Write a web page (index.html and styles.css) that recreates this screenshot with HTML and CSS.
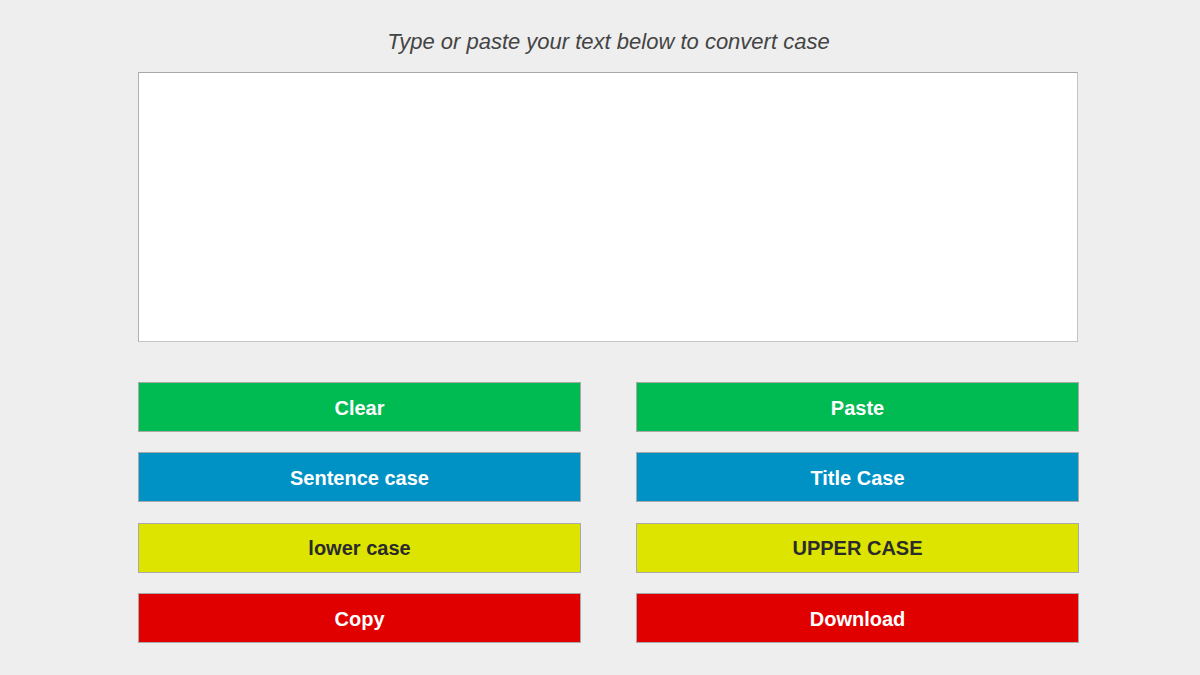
FILE: index.html
```html
<!DOCTYPE html>
<html>
<head>
<meta charset="utf-8">
<link rel="stylesheet" href="styles.css">
</head>
<body>
<div class="wrap">
  <h1 class="title">Type or paste your text below to convert case</h1>
  <textarea class="input"></textarea>
  <div class="buttons">
    <button class="btn green">Clear</button>
    <button class="btn green">Paste</button>
    <button class="btn blue">Sentence case</button>
    <button class="btn blue">Title Case</button>
    <button class="btn yellow">lower case</button>
    <button class="btn yellow">UPPER CASE</button>
    <button class="btn red">Copy</button>
    <button class="btn red">Download</button>
  </div>
</div>
</body>
</html>
```
FILE: styles.css
```css
html, body {
  margin: 0;
  padding: 0;
  background: #eeeeee;
  font-family: "Liberation Sans", Arial, sans-serif;
}
.wrap {
  width: 941px;
  margin-left: 138px;
  padding-top: 29px;
}
.title {
  margin: 0 0 17px 0;
  font-size: 22px;
  line-height: 26px;
  font-style: italic;
  font-weight: normal;
  color: #444444;
  text-align: center;
}
.input {
  display: block;
  box-sizing: border-box;
  width: 940px;
  height: 270px;
  margin: 0;
  background: #ffffff;
  border: 1px solid #c4c4c4;
  border-top-color: #a8a8a8;
  border-left-color: #b0b0b0;
  resize: none;
  outline: none;
}
.buttons {
  margin-top: 40px;
  display: grid;
  grid-template-columns: 443px 443px;
  column-gap: 55px;
  row-gap: 20.4px;
}
.btn {
  box-sizing: border-box;
  height: 50px;
  margin: 0;
  padding: 2px 0 0 0;
  border: 1px solid #a9a9a9;
  font-family: "Liberation Sans", Arial, sans-serif;
  font-size: 20px;
  font-weight: bold;
  color: #ffffff;
  text-align: center;
}
.green { background: #00ba52; }
.blue { background: #0091c5; }
.yellow { background: #dce400; color: #2b2b2b; }
.red { background: #e00000; }
```
